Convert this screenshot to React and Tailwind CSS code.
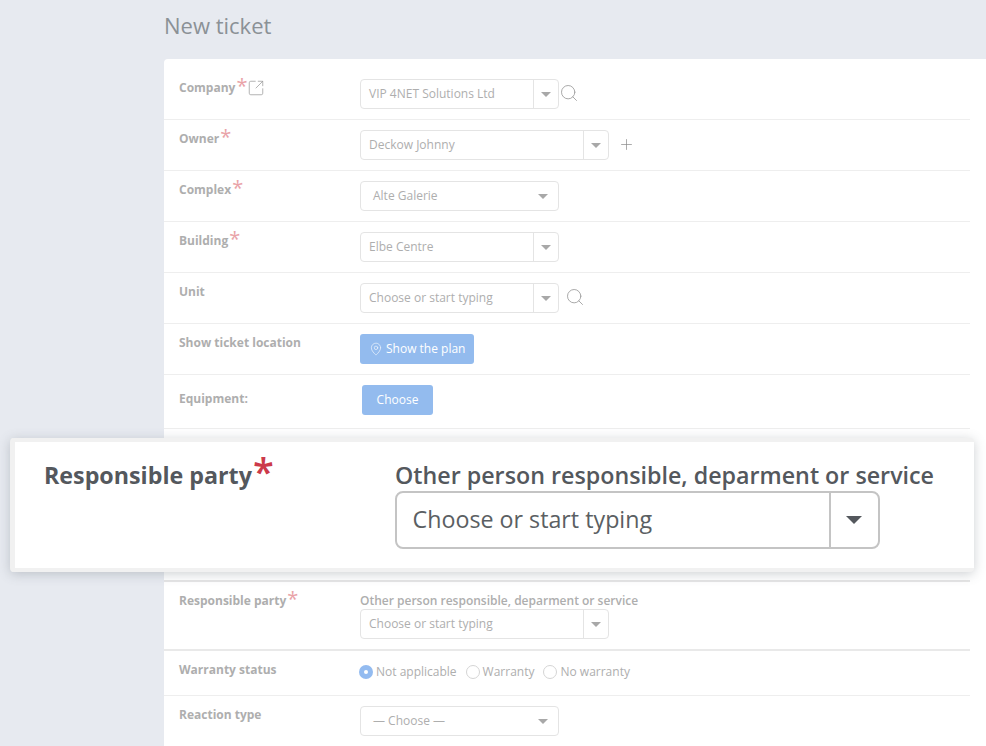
import React from 'react'
import { Search, Plus, MapPin, SquareArrowOutUpRight } from 'lucide-react'

const Star = ({ className }) => (
  <span className={`absolute font-normal text-[#e9a3a8] text-[20px] leading-none top-[-4px] ${className}`}>*</span>
)

const Label = ({ text, required, children }) => (
  <div className="w-[181px] shrink-0 text-[12px] font-bold text-[#aeaeae] leading-[16px] pt-[1px] flex items-start">
    <span className="relative">
      {text}
      {required && <Star className="left-full ml-[1px]" />}
    </span>
    {children}
  </div>
)

const Caret = () => (
  <span className="w-0 h-0 border-x-[5px] border-x-transparent border-t-[5px] border-t-[#a8a8a8]" />
)

const Combo = ({ text, wide, plain }) => (
  <div
    className={`h-[30px] ${wide ? 'w-[249px]' : 'w-[199px]'} border border-[#e4e4e4] rounded-[4px] flex items-center text-[12px] text-[#aeaeae] bg-white`}
  >
    <span className={`flex-1 ${plain ? 'pl-[12px]' : 'pl-[8px]'}`}>{text}</span>
    <span className={`w-[25px] h-full flex items-center justify-center ${plain ? 'mr-[3px]' : 'border-l border-[#e4e4e4]'}`}>
      <Caret />
    </span>
  </div>
)

const Row = ({ children, className = 'h-[51px] pt-[10px]', border = 'border-b border-[#eeeeee]' }) => (
  <div className={`flex items-start pl-[15px] ${border} ${className}`}>{children}</div>
)

const Radio = ({ text, checked }) => (
  <label className="flex items-center gap-[3px] text-[12px] text-[#aeaeae]">
    {checked ? (
      <span className="w-[14px] h-[14px] rounded-full bg-[#93bbf0] flex items-center justify-center">
        <span className="w-[4px] h-[4px] rounded-full bg-white" />
      </span>
    ) : (
      <span className="w-[14px] h-[14px] rounded-full border border-[#d5d5d5] bg-white" />
    )}
    {text}
  </label>
)

export default function App() {
  return (
    <div className="relative h-[746px] overflow-hidden bg-[#e7eaf0] font-['Open_Sans',sans-serif]">
      <div className="pl-[164px]">
        <h1 className="h-[59px] pt-[10px] text-[22px] leading-[30px] text-[#8b9196] font-normal">New ticket</h1>
        <div className="bg-white rounded-tl-[4px] pr-[16px]">
          <Row className="h-[61px] pt-[20px]">
            <Label text="Company" required>
              <SquareArrowOutUpRight size={18} strokeWidth={1} className="ml-[12px] mt-[-1px] text-[#999999]" />
            </Label>
            <Combo text="VIP 4NET Solutions Ltd" />
            <Search size={20} strokeWidth={1} className="mt-[4px] text-[#999999]" />
          </Row>
          <Row>
            <Label text="Owner" required />
            <Combo text="Deckow Johnny" wide />
            <Plus size={17} strokeWidth={1} className="ml-[9px] mt-[6px] text-[#8a8a8a]" />
          </Row>
          <Row>
            <Label text="Complex" required />
            <Combo text="Alte Galerie" plain />
          </Row>
          <Row>
            <Label text="Building" required />
            <Combo text="Elbe Centre" />
          </Row>
          <Row>
            <Label text="Unit" />
            <Combo text="Choose or start typing" />
            <Search size={20} strokeWidth={1} className="ml-[6px] mt-[4px] text-[#999999]" />
          </Row>
          <Row>
            <Label text="Show ticket location" />
            <button className="h-[30px] w-[114px] rounded-[3px] bg-[#93bbee] text-white text-[12px] flex items-center pl-[9px] gap-[3px]">
              <MapPin size={14} strokeWidth={1} />
              Show the plan
            </button>
          </Row>
          <Row className="h-[54px] pt-[10px]">
            <div className="pt-[5px]">
              <Label text="Equipment:" />
            </div>
            <button className="ml-[2px] h-[30px] w-[71px] rounded-[3px] bg-[#93bbee] text-white text-[12px]">Choose</button>
          </Row>
          <Row className="h-[153px]" border="border-b-2 border-[#e6e6e6]" />
          <Row className="h-[69px] pt-[11px]" border="border-b-2 border-[#e9e9e9]">
            <div className="mt-[-1px]">
              <Label text="Responsible party" required />
            </div>
            <div>
              <div className="text-[12px] leading-[16px] font-semibold text-[#aeaeae] whitespace-nowrap">
                Other person responsible, deparment or service
              </div>
              <Combo text="Choose or start typing" wide />
            </div>
          </Row>
          <Row className="h-[45px] pt-[10px]">
            <Label text="Warranty status" />
            <div className="flex items-center gap-[9px] pt-[2px] ml-[-1px]">
              <Radio text="Not applicable" checked />
              <Radio text="Warranty" />
              <Radio text="No warranty" />
            </div>
          </Row>
          <Row className="h-[51px] pt-[10px]" border="">
            <Label text="Reaction type" />
            <Combo text="— Choose —" plain />
          </Row>
        </div>
      </div>

      <div className="absolute left-[10px] top-[438px] w-[964px] h-[134px] border-y-4 border-l-[5px] border-[#f1f1f1] rounded-[4px] bg-white shadow-[0_2px_12px_rgba(90,100,110,0.3)] flex items-start pl-[29px] pt-[18px]">
        <div className="w-[351px] shrink-0 text-[23.25px] font-bold leading-[30px] text-[#54585d]">
          <span className="relative">
            Responsible party
            <span className="absolute left-full ml-[1px] top-[-7px] text-[38px] leading-none font-semibold text-[#cc3a4a]">*</span>
          </span>
        </div>
        <div>
          <div className="text-[23.25px] font-semibold leading-[30px] text-[#54585d] whitespace-nowrap">
            Other person responsible, deparment or service
          </div>
          <div className="w-[485px] h-[58px] mt-[1px] border-2 border-[#c4c4c4] rounded-[8px] flex items-center text-[23.25px] leading-[30px] text-[#5b5f63]">
            <span className="flex-1 pl-[15.5px] mt-[-2px]">Choose or start typing</span>
            <span className="w-[49px] h-full border-l-2 border-[#c4c4c4] flex items-center justify-center">
              <span className="w-0 h-0 mr-[2px] border-x-[8px] border-x-transparent border-t-[8px] border-t-[#54585d]" />
            </span>
          </div>
        </div>
      </div>
    </div>
  )
}
